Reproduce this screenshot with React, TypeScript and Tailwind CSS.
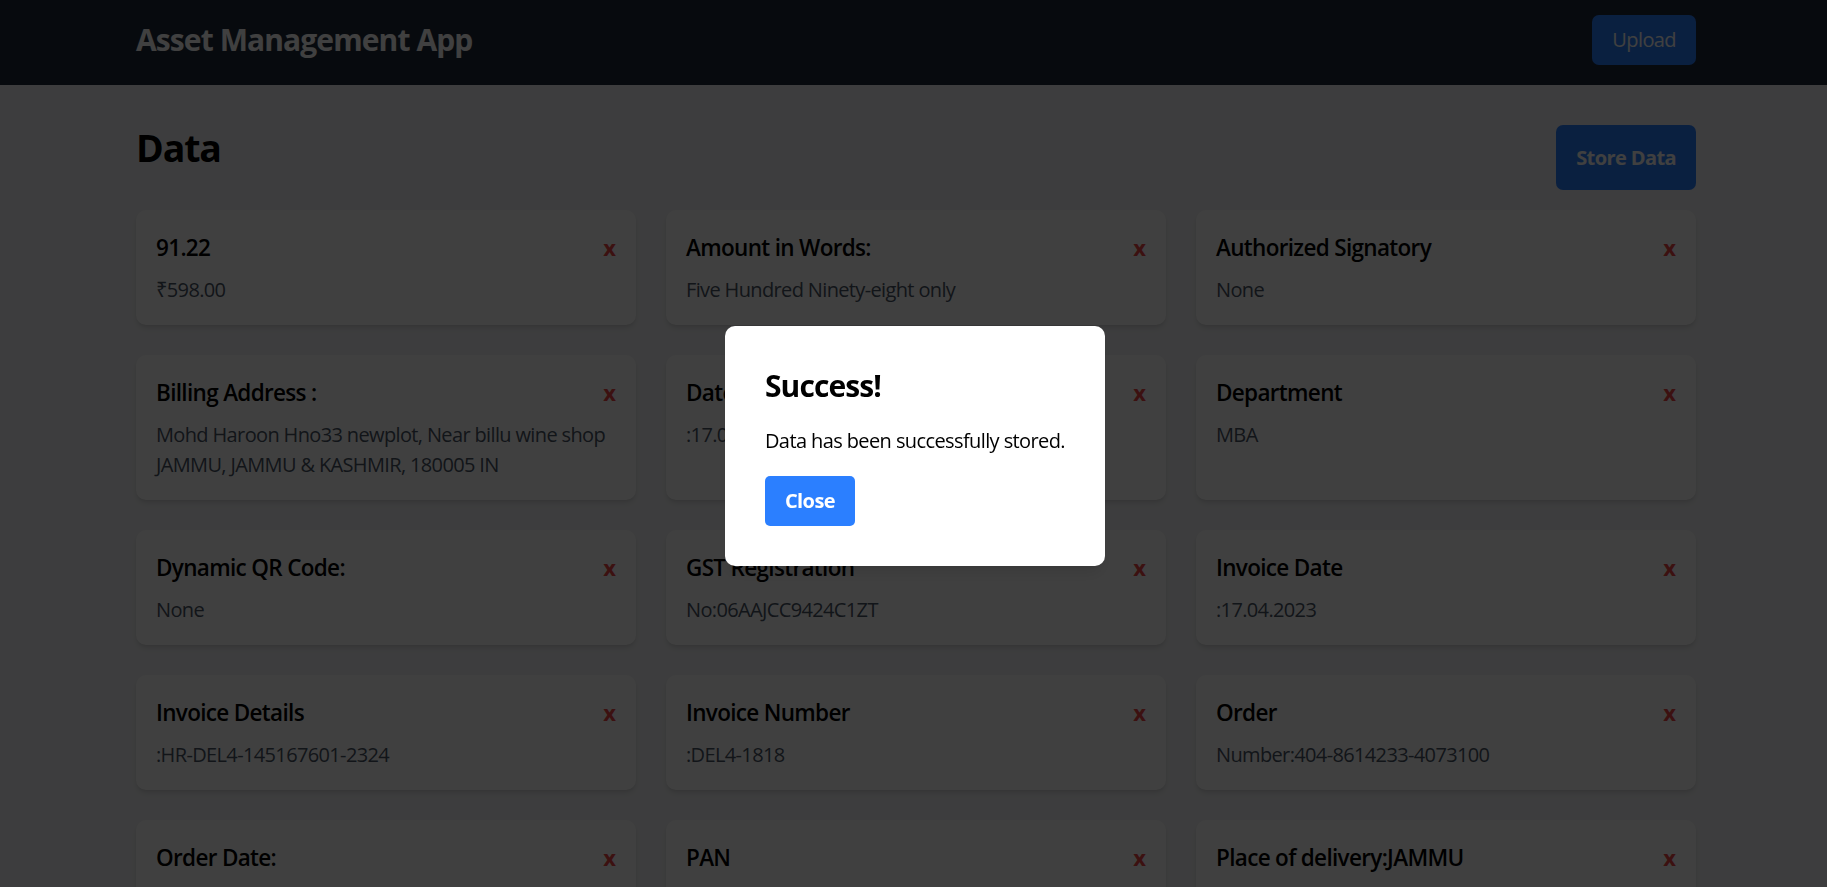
import React from "react";

type Item = { title: string; value: string };

const items: Item[] = [
  { title: "91.22", value: "₹598.00" },
  { title: "Amount in Words:", value: "Five Hundred Ninety-eight only" },
  { title: "Authorized Signatory", value: "None" },
  {
    title: "Billing Address :",
    value: "Mohd Haroon Hno33 newplot, Near billu wine shop JAMMU, JAMMU & KASHMIR, 180005 IN",
  },
  { title: "Date", value: ":17.04.2023" },
  { title: "Department", value: "MBA" },
  { title: "Dynamic QR Code:", value: "None" },
  { title: "GST Registration", value: "No:06AAJCC9424C1ZT" },
  { title: "Invoice Date", value: ":17.04.2023" },
  { title: "Invoice Details", value: ":HR-DEL4-145167601-2324" },
  { title: "Invoice Number", value: ":DEL4-1818" },
  { title: "Order", value: "Number:404-8614233-4073100" },
  { title: "Order Date:", value: "17.04.2023" },
  { title: "PAN", value: "No:AAJCC9424C" },
  { title: "Place of delivery:JAMMU", value: "None" },
];

function Card({ item }: { item: Item }) {
  return (
    <div className="bg-white rounded-[10px] shadow-md p-[20px]">
      <div className="flex items-center justify-between mb-[10px]">
        <h3 className="text-[22.5px] leading-[35px] font-semibold tracking-[-0.03em] text-black">{item.title}</h3>
        <button className="text-[22px] leading-[35px] font-bold text-[#ef4444]">x</button>
      </div>
      <p className="text-[20px] leading-[30px] tracking-[-0.032em] text-gray-600">{item.value}</p>
    </div>
  );
}

export default function App() {
  return (
    <div className="h-screen overflow-hidden bg-gray-100 font-['Open_Sans','Noto_Sans',sans-serif]">
      <header className="bg-gray-800 h-[85px]">
        <div className="ml-[136px] w-[1560px] h-full flex items-center justify-between pb-[5px]">
          <h1 className="text-[30px] leading-[40px] font-bold tracking-[-0.03em] text-white">Asset Management App</h1>
          <button className="bg-blue-500 text-white text-[20px] leading-[30px] tracking-[-0.03em] px-[20px] py-[10px] rounded-[7px]">
            Upload
          </button>
        </div>
      </header>
      <main className="ml-[136px] w-[1560px] pt-[40px]">
        <div className="flex items-start justify-between mb-[20px]">
          <h2 className="text-[37.5px] leading-[45px] font-bold tracking-[-0.03em] text-black">Data</h2>
          <button className="bg-blue-500 text-white text-[20px] leading-[35px] font-bold tracking-[-0.03em] px-[20px] py-[15px] rounded-[7px]">
            Store Data
          </button>
        </div>
        <div className="grid grid-cols-3 gap-[30px]">
          {items.map((it, i) => (
            <Card key={i} item={it} />
          ))}
        </div>
      </main>
      <div className="fixed inset-0 bg-black/75 flex items-center justify-center pt-[5px] pl-[3px]">
        <div className="bg-white rounded-[10px] p-[40px] shadow-lg">
          <h2 className="text-[30px] leading-[40px] font-bold tracking-[-0.03em] text-black mb-[20px]">Success!</h2>
          <p className="text-[20px] leading-[30px] tracking-[-0.03em] text-black mb-[20px]">Data has been successfully stored.</p>
          <button className="bg-blue-500 text-white text-[20px] leading-[30px] font-bold tracking-[-0.03em] px-[20px] py-[10px] rounded-[5px]">
            Close
          </button>
        </div>
      </div>
    </div>
  );
}
